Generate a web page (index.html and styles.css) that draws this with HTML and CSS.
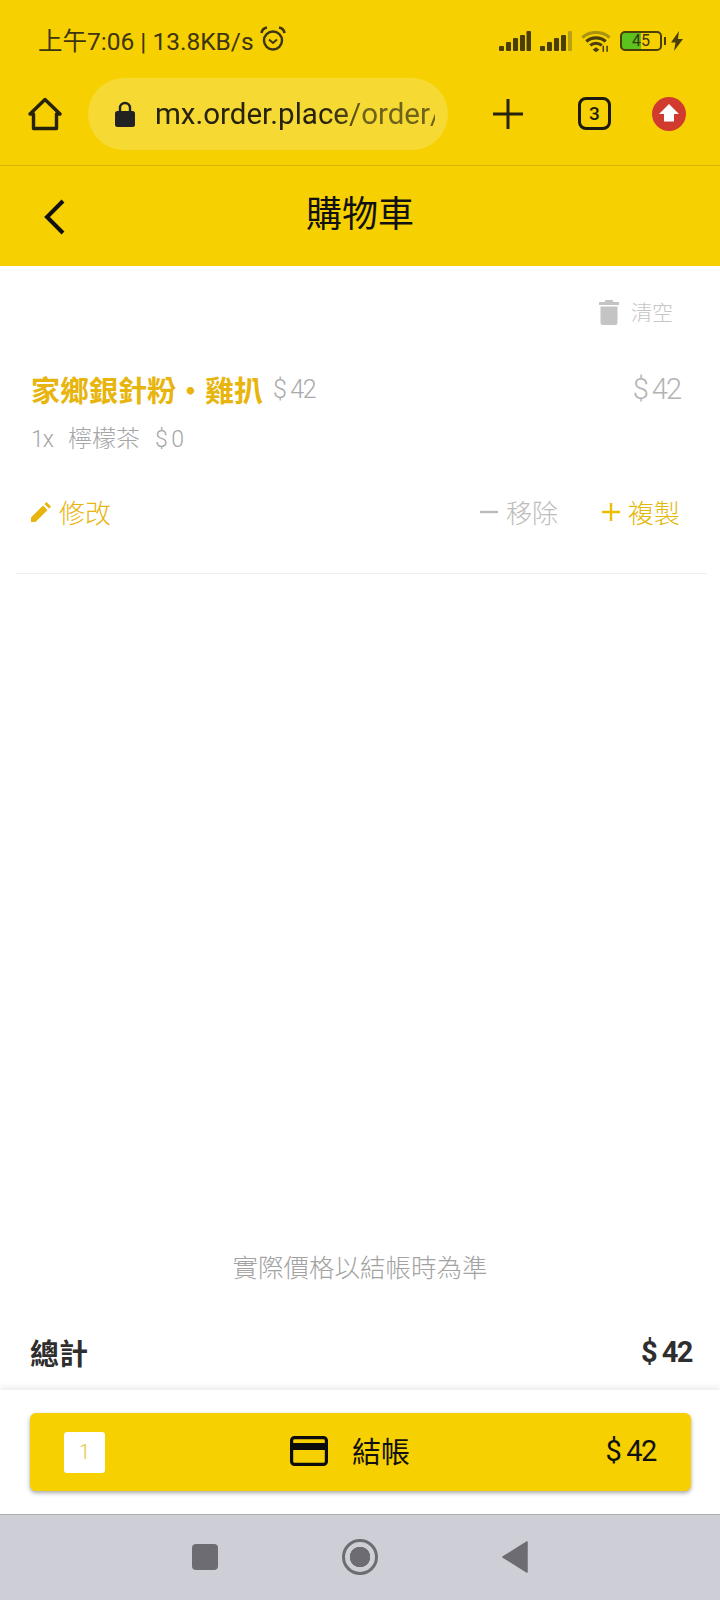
FILE: index.html
```html
<!DOCTYPE html>
<html lang="zh-Hant">

<head>
    <meta charset="UTF-8">
    <meta name="viewport" content="width=device-width, initial-scale=1.0">
    <title>購物車</title>
    <link rel="stylesheet" href="styles.css">
</head>

<body>
    <div class="phone">
        <div class="topbar">
            <div class="status">
                <div class="status-left">
                    <span>上午7:06 | 13.8KB/s</span>
                    <svg class="alarm" width="26" height="26" viewBox="0 0 26 26" fill="none" stroke="#3d3510" stroke-width="2.4">
                        <circle cx="13" cy="14.5" r="9"/>
                        <path d="M9 13.500l4 3.500 4-3.500" stroke-width="2"/>
                        <path d="M1.500 7C2 4 4 2 7 1.500M24.500 7C24 4 22 2 19 1.500" stroke-width="2.6"/>
                    </svg>
                </div>
                <div class="status-right">
                    <svg width="32" height="20" viewBox="0 0 32 20" fill="#4a3f08">
                        <rect x="0" y="15" width="5" height="5" rx="1"/>
                        <rect x="7" y="11" width="5" height="9" rx="1"/>
                        <rect x="14" y="7" width="5" height="13" rx="1"/>
                        <rect x="21" y="4" width="5" height="16" rx="1"/>
                        <rect x="27.500" y="0" width="4.500" height="20" rx="1"/>
                    </svg>
                    <svg width="32" height="20" viewBox="0 0 32 20" fill="#4a3f08">
                        <rect x="0" y="15" width="5" height="5" rx="1"/>
                        <rect x="7" y="11" width="5" height="9" rx="1"/>
                        <rect x="14" y="7" width="5" height="13" rx="1"/>
                        <rect x="21" y="4" width="5" height="16" rx="1"/>
                        <rect x="28" y="0" width="4" height="20" rx="1" fill="#b9a012"/>
                    </svg>
                    <svg class="wifi" width="30" height="23" viewBox="0 0 31 23" fill="none" stroke="#4a3f08" stroke-width="3.2">
                        <path d="M1.500 7.500C9 .5 22 .5 29.500 7.500" stroke="#a8920f"/>
                        <path d="M5.500 11.500C11 6.500 20 6.500 25.500 11.500"/>
                        <path d="M9.500 15.500C13 12.500 18 12.500 21.500 15.500"/>
                        <path d="M12 20l3.500-2.500 3.500 2.500-3.500 2.500z" fill="#4a3f08" stroke="none"/>
                        <path d="M23 16v6M27 16v6" stroke-width="1.600"/>
                    </svg>
                    <div class="battery-wrap">
                        <div class="battery">45</div>
                        <div class="battery-tip"></div>
                    </div>
                    <svg class="bolt" width="12" height="20" viewBox="0 0 12 20" fill="#4a3f08">
                        <path d="M8 0L0 11.500h4.500L3 20l9-12H7z"/>
                    </svg>
                </div>
            </div>
            <div class="browser">
                <svg class="home" width="34" height="34" viewBox="0 0 34 34" fill="none" stroke="#26220c" stroke-width="3.4" stroke-linejoin="round">
                    <path d="M2 17L17 2.500 32 17H28.500V31.500H5.500V17z"/>
                </svg>
                <div class="url">
                    <svg width="20" height="26" viewBox="0 0 20 26">
                        <path d="M5 11V7a5 5 0 0 1 10 0v4" fill="none" stroke="#222" stroke-width="2.4"/>
                        <rect x="0" y="10" width="20" height="16" rx="2.500" fill="#222"/>
                    </svg>
                    <div class="url-text">mx.order.place/order/</div>
                </div>
                <svg class="plus" width="30" height="30" viewBox="0 0 30 30" stroke="#26220c" stroke-width="3">
                    <path d="M0 15H30M15 0V30"/>
                </svg>
                <div class="tabs">3</div>
                <svg class="update" width="34" height="34" viewBox="0 0 34 34">
                    <circle cx="17" cy="17" r="17" fill="#d13a2e"/>
                    <path d="M17 7L27 17H22V24.500H12V17H7z" fill="#fff"/>
                </svg>
            </div>
            <div class="page-head">
                <svg class="back" width="22" height="36" viewBox="0 0 22 36" fill="none" stroke="#111" stroke-width="4">
                    <path d="M20 2L4 18 20 34"/>
                </svg>
                <h1>購物車</h1>
            </div>
        </div>

        <div class="cart">
            <div class="clear-row">
                <svg class="trash" width="20" height="25" viewBox="0 0 20 25" fill="#c4c4c4">
                    <path d="M6.500 0h7l1 2H20v3H0V2h5.500zM1.500 6.500h17V22.500a2.500 2.500 0 0 1-2.500 2.500H4a2.500 2.500 0 0 1-2.500-2.500z"/>
                </svg>
                <span>清空</span>
            </div>
            <div class="item">
                <div class="item-top">
                    <div class="item-name">
                        <span class="name">家鄉銀針粉・雞扒</span>
                        <span class="price">$ 42</span>
                    </div>
                    <span class="line-total">$ 42</span>
                </div>
                <div class="option">
                    <span class="num">1x</span>
                    <span>檸檬茶</span>
                    <span class="num">$ 0</span>
                </div>
                <div class="actions">
                    <div class="action edit">
                        <svg width="20" height="20" viewBox="0 0 20 20" fill="#e8b50e">
                            <path d="M0 20V15.500L12 3.500 16.500 8 4.500 20zM13.500 2L15.500 0 20 4.500 18 6.500z"/>
                        </svg>
                        <span>修改</span>
                    </div>
                    <div class="action remove">
                        <svg width="18" height="18" viewBox="0 0 18 18" stroke="#bcbcbc" stroke-width="2.400">
                            <path d="M0 9H18"/>
                        </svg>
                        <span>移除</span>
                    </div>
                    <div class="action copy">
                        <svg width="18" height="18" viewBox="0 0 18 18" stroke="#e8c000" stroke-width="2.400">
                            <path d="M0 9H18M9 0V18"/>
                        </svg>
                        <span>複製</span>
                    </div>
                </div>
            </div>
        </div>

        <div class="notice">實際價格以結帳時為準</div>
        <div class="total">
            <span>總計</span>
            <span class="total-price">$ 42</span>
        </div>

        <div class="checkout">
            <div class="pay-btn">
                <div class="count">1</div>
                <svg class="card" width="38" height="30" viewBox="0 0 38 30" fill="none" stroke="#0c0c0c" stroke-width="3.200">
                    <rect x="1.600" y="1.600" width="34.800" height="26.800" rx="3"/>
                    <rect x="1.600" y="7" width="34.800" height="7" fill="#0c0c0c" stroke="none"/>
                </svg>
                <span class="pay-label">結帳</span>
                <span class="pay-price">$ 42</span>
            </div>
        </div>

        <div class="navbar">
            <div class="nav-square"></div>
            <div class="nav-circle"></div>
            <svg width="26" height="32" viewBox="0 0 26 32" fill="#6d6c72">
                <path d="M25 1V31L1 16z" stroke="#6d6c72" stroke-linejoin="round" stroke-width="1.500"/>
            </svg>
        </div>
    </div>
</body>

</html>
```

FILE: styles.css
```css
* {
    box-sizing: border-box;
}

body {
    font-family: Roboto, "Noto Sans CJK TC", sans-serif;
    margin: 0;
    padding: 0;
    background-color: #fff;
}

.phone {
    display: flex;
    flex-direction: column;
    width: 720px;
    height: 1600px;
    overflow: hidden;
}

.topbar {
    background-color: #f6d000;
    height: 266px;
}

.status {
    display: flex;
    justify-content: space-between;
    align-items: center;
    height: 78px;
    padding: 0 37px 0 38px;
    color: #3d3510;
    font-size: 24.500px;
}

.status-left {
    display: flex;
    align-items: center;
    gap: 6px;
}

.status-right {
    display: flex;
    align-items: center;
    gap: 9px;
    margin-top: 4px;
}

.wifi {
    margin-left: 0;
}

.bolt {
    margin-left: -4px;
}

.battery-wrap {
    display: flex;
    align-items: center;
    gap: 2px;
}

.battery {
    width: 42px;
    height: 20px;
    border: 2px solid #4a3f08;
    border-radius: 5px;
    background: linear-gradient(to right, #5cc21e 50%, transparent 50%);
    color: #3d3510;
    font-size: 16px;
    line-height: 16px;
    text-align: center;
}

.battery-tip {
    width: 2px;
    height: 8px;
    background-color: #4a3f08;
}

.browser {
    display: flex;
    align-items: center;
    height: 88px;
    padding: 0 0 16px 28px;
    border-bottom: 1px solid #d8b700;
}

.home {
    margin-right: 26px;
}

.url {
    display: flex;
    align-items: center;
    width: 360px;
    height: 72px;
    padding-left: 27px;
    border-radius: 36px;
    background-color: #f6da33;
}

.url-text {
    width: 280px;
    margin-left: 20px;
    overflow: hidden;
    white-space: nowrap;
    font-size: 29.500px;
    color: #26220c;
    -webkit-mask-image: linear-gradient(to right, #000 60%, rgba(0, 0, 0, 0.65) 75%);
    mask-image: linear-gradient(to right, #000 60%, rgba(0, 0, 0, 0.65) 75%);
}

.plus {
    margin-left: 45px;
}

.tabs {
    width: 33px;
    height: 33px;
    margin-left: 55px;
    border: 3px solid #1c1a0c;
    border-radius: 8px;
    font-size: 19px;
    font-weight: 500;
    line-height: 27px;
    text-align: center;
    color: #1c1a0c;
}

.update {
    margin-left: 41px;
}

.page-head {
    display: flex;
    align-items: center;
    position: relative;
    justify-content: center;
    height: 100px;
}

.back {
    position: absolute;
    left: 43px;
    top: 33px;
}

h1 {
    margin: -10px 0 0;
    font-size: 36px;
    font-weight: 400;
    color: #111;
}

.cart {
    flex: 1;
    padding-top: 30px;
}

.clear-row {
    display: flex;
    justify-content: flex-end;
    align-items: center;
    gap: 12px;
    padding-right: 47px;
    font-size: 21px;
    font-weight: 300;
    color: #c6c6c6;
}

.trash {
    margin-top: 2px;
}

.item {
    margin: 42px 13px 0 16px;
    padding: 0 27px 43px 15px;
    border-bottom: 1px solid #efefef;
}

.item-top {
    display: flex;
    justify-content: space-between;
    align-items: center;
}

.item-name {
    display: flex;
    align-items: center;
    gap: 10px;
}

.name {
    font-size: 29px;
    font-weight: 700;
    color: #e8b50e;
}

.price {
    font-size: 25px;
    font-weight: 300;
    letter-spacing: -1.400px;
    color: #a9a9a9;
}

.line-total {
    font-size: 29px;
    font-weight: 300;
    letter-spacing: -2px;
    color: #b3b3b3;
}

.option {
    display: flex;
    align-items: baseline;
    gap: 15px;
    margin-top: 9px;
    font-size: 24px;
    font-weight: 300;
    color: #a6a6a6;
}

.num {
    font-size: 23px;
    letter-spacing: -1px;
}

.actions {
    display: flex;
    align-items: center;
    margin-top: 39px;
    font-size: 26px;
    font-weight: 300;
}

.action {
    display: flex;
    align-items: center;
    gap: 8px;
}

.edit {
    margin-right: auto;
    color: #e8b50e;
}

.remove {
    margin-right: 44px;
    color: #bcbcbc;
}

.copy {
    color: #e3b80c;
}

.notice {
    text-align: center;
    font-size: 25.500px;
    font-weight: 300;
    color: #a2a2a2;
}

.total {
    display: flex;
    justify-content: space-between;
    align-items: center;
    height: 44px;
    margin-top: 46px;
    margin-bottom: 16px;
    padding: 0 28px 0 30px;
    font-size: 29px;
    font-weight: 700;
    color: #2e2e2e;
}

.total-price {
    letter-spacing: -1.500px;
}

.checkout {
    display: flex;
    align-items: center;
    height: 125px;
    padding: 0 29px 0 30px;
    border-bottom: 1px solid #aeaeae;
    box-shadow: 0 -3px 6px rgba(0, 0, 0, 0.08);
    background-color: #fff;
}

.pay-btn {
    display: flex;
    align-items: center;
    width: 661px;
    height: 78px;
    padding: 0 35px 0 34px;
    border-radius: 6px;
    background-color: #f6d000;
    box-shadow: 0 2px 4px rgba(0, 0, 0, 0.35);
    color: #111;
}

.count {
    width: 41px;
    height: 41px;
    margin-right: 185px;
    border-radius: 3px;
    background-color: #fff;
    font-size: 20px;
    font-weight: 300;
    line-height: 41px;
    text-align: center;
    color: #e8c23a;
}

.card {
    margin-top: -3px;
}

.pay-label {
    margin: -5px 0 0 24px;
    font-size: 29px;
}

.pay-price {
    margin: -2px 0 0 auto;
    font-size: 29px;
    letter-spacing: -1.400px;
}

.navbar {
    display: flex;
    justify-content: center;
    align-items: center;
    gap: 124px;
    flex: 0 0 85px;
    padding-bottom: 2px;
    background-color: #cdced6;
}

.nav-square {
    width: 26px;
    height: 26px;
    border-radius: 4px;
    background-color: #6d6c72;
}

.nav-circle {
    width: 36px;
    height: 36px;
    border: 3px solid #6d6c72;
    border-radius: 50%;
    background: radial-gradient(circle, #6d6c72 0 10px, transparent 10.500px);
}
```
